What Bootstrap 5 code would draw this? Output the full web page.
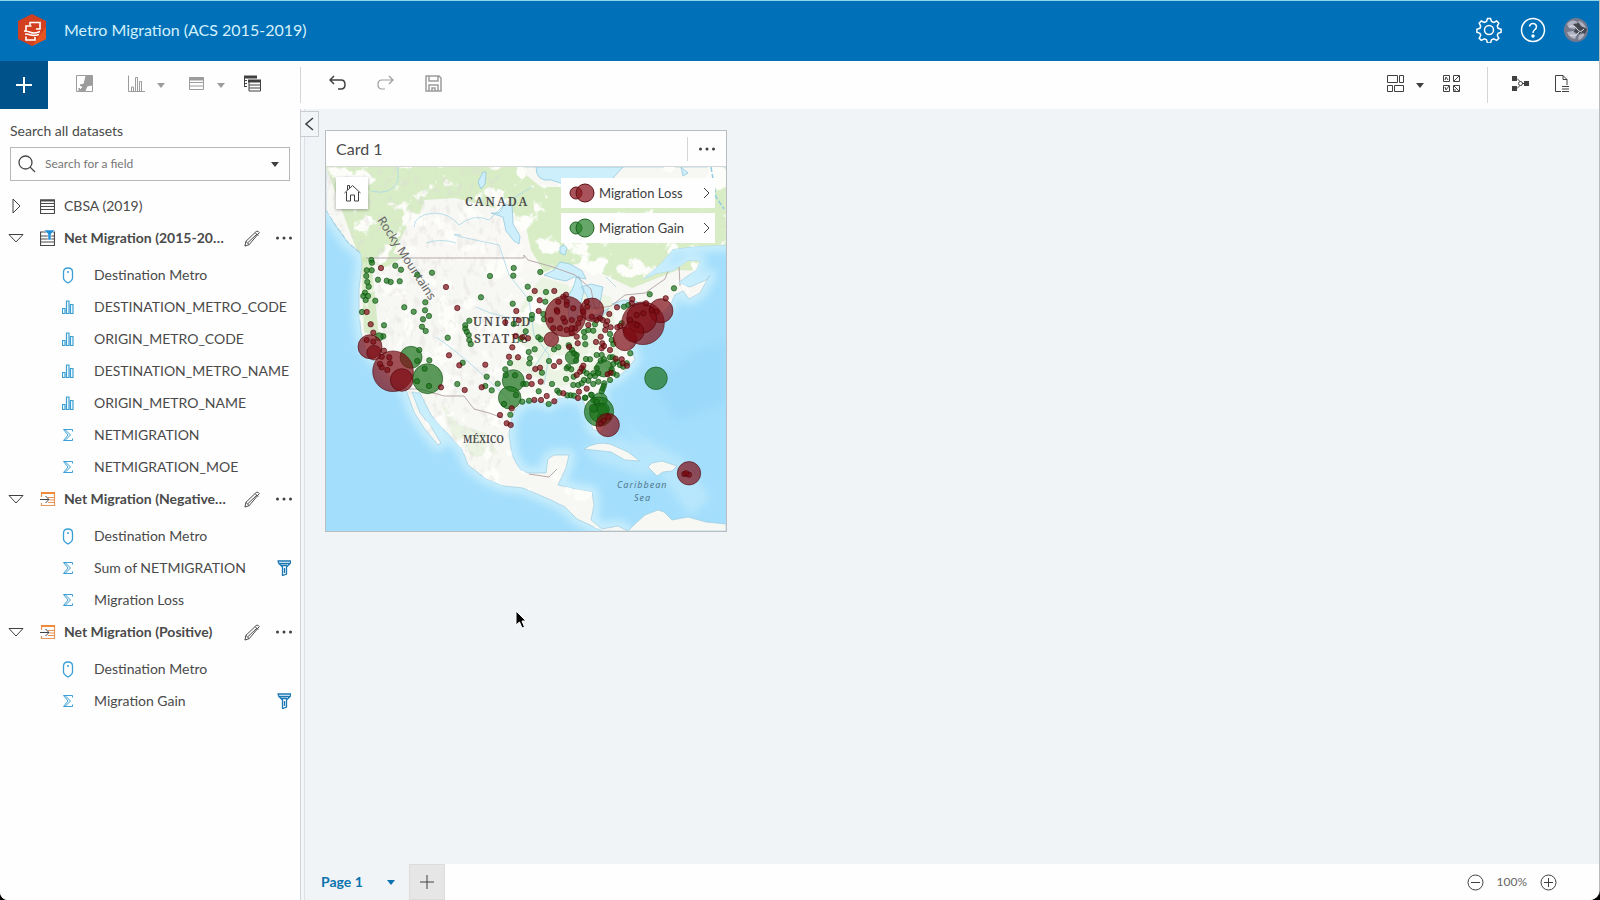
<!DOCTYPE html>
<html lang="en">
<head>
<meta charset="utf-8">
<meta name="viewport" content="width=device-width, initial-scale=1">
<title>Metro Migration (ACS 2015-2019)</title>
<link href="https://cdn.jsdelivr.net/npm/bootstrap@5.3.0/dist/css/bootstrap.min.css" rel="stylesheet">
<style>
body{font-family:Lato,"Open Sans",sans-serif;font-size:14px;line-height:20px;color:#4a4a4a;background:#000}
.app-frame{background:#fefefe;border-right:1px solid #bbb;border-radius:0 0 10px 8px;overflow:hidden}
.app-header{height:61px;background:#0070b8;border-top:1px solid #8fd6ec;color:#d3f1fb;padding:0 11px 2px 17px}
.app-title{font-size:16px;line-height:24px;font-weight:400;margin:0 0 0 17px}
button.plain{background:none;border:0;padding:0;color:#404040;display:inline-flex;align-items:center;justify-content:center}
svg{display:block}
svg:not([fill]){fill:none}
svg:not([stroke]){stroke:currentColor}
.toolbar-row{height:48px;background:#fefefe;padding-right:21px}
.toolbar-row button.tool{width:32px;height:32px}
.toolbar-row button.drop{width:18px;height:32px}
.toolbar-row button:disabled{color:#9c9c9c}
.toolbar-row button.add-data{width:48px;height:48px;background:#00528a;color:#fff}
.rule{width:1px;height:36px;background:#d6d6d6}
.gap-a{margin-left:20px}.gap-b{margin-left:10px}.gap-c{margin-left:32px}.gap-d{margin-left:18px}.gap-e{margin-left:6px}
.side-pane{width:301px;border-right:1px solid #d0d4d8;background:#fefefe;padding-top:12px}
.pane-edge{width:4px;background:#f4f7f9;border-right:1px solid #dde1e5}
.side-pane .search-label{margin:0 10px 6px;display:block}
.search-box{height:34px;margin:0 10px 9px 10px;border:1px solid #b8b8b8;padding:0 6px 0 7px}
.search-box input{border:0;outline:0;background:none;font-size:12px;min-width:0;color:#555;padding:0 0 0 9px}
.search-box input::placeholder{color:#777;opacity:1}
.dataset{height:32px;padding:0 6px 0 7px}
.dataset .twist{width:18px}
.dataset .kind{width:16px;margin:0 8px 0 15px}
.dataset .dots{width:20px;margin-left:13px}
.dataset .pen{width:18px;margin-left:8px}
.fields{padding:5px 9px 0 59px;margin:0;list-style:none}
.fields li{height:32px;white-space:nowrap}
.fields .glyph{width:17px;margin-right:18px;color:#3a9fd4}
.fields .funnel{margin-left:auto;color:#1b78b5}
.work-area{background:#f0f4f7;min-width:0}
.collapse-pane{position:absolute;left:-5px;top:2px}
button.collapse-btn{width:19px;height:26px;background:#f2f5f8;border:1px solid #c9cdd1}
.map-card{width:402px;margin:21px 0 0 20px;background:#fefefe;border:1px solid #b9bdc0}
.map-card .title-bar{height:36px;padding-left:10px;font-size:16px;border-bottom:1px solid #d8d8d8}
.title-bar .rule{height:24px}
.title-bar button{width:38px;height:34px}
.map-view{position:relative}
.home-tool{position:absolute;left:10px;top:10px}
button.home-btn{width:32px;height:32px;background:#fff;box-shadow:0 1px 3px #0005}
.legend-stack{position:absolute;right:11px;top:11px;width:154px}
.legend-stack button.legend-item{width:100%;height:30px;background:#fefefe;font-size:13px;padding:0 4px 0 8px}
.legend-stack button+button{margin-top:5px}
.map-view .swatch{width:26px;margin-right:4px}
.pages{height:36px;background:#fefefe}
.page-tab{width:104px;background:#f0f4f7;color:#0b73ae;font-weight:700;padding:0 14px 0 16px}
.page-tab a{color:inherit;text-decoration:none}
.pages button.new-page{width:36px;height:36px;background:#e6e6e6;border:1px solid #dcdcdc}
.zoom-set{font-size:12px;color:#666;margin-right:42px;gap:13px}
.pointer{position:absolute;left:210px;top:501px}
</style>
</head>
<body>
<svg width="0" height="0" class="position-absolute" aria-hidden="true">
<defs>
<symbol id="caret" viewBox="0 0 8 5"><path d="M0 0h8l-4 5z" fill="currentColor" stroke="none"/></symbol>
<symbol id="dots" viewBox="0 0 18 4"><g fill="currentColor" stroke="none"><circle cx="2.500" cy="2" r="1.500"/><circle cx="9" cy="2" r="1.500"/><circle cx="15.500" cy="2" r="1.500"/></g></symbol>
<symbol id="pencil" viewBox="0 0 18 18"><path d="M1 17l1-5L13 1.500q2-1 3.200 1.200L5.500 15.500zM2 12l3.500 3.500M12 3l3 3M4 13.500L13.500 4.500"/></symbol>
<symbol id="open" viewBox="0 0 16 9"><path d="M1 .5h14l-7 7.500z"/></symbol>
<symbol id="closed" viewBox="0 0 9 16"><path d="M1 1v14l7-7z"/></symbol>
<symbol id="pin" viewBox="0 0 12 17"><path d="M1.500 5Q1.500 1 6 1t4.500 4v6q0 2.500-4.500 5-4.500-2.500-4.500-5z" stroke-width="1.300"/><circle cx="6" cy="5" r="1" fill="currentColor" stroke="none"/></symbol>
<symbol id="bars" viewBox="0 0 12 14"><path d="M.5 8.500H3v5H.5zM4.500 1H7v12.500H4.500zM8.500 4.500H11v9H8.500z" stroke-width="1.200"/></symbol>
<symbol id="sigma" viewBox="0 0 12 14"><path d="M10.500 3.500V1.500h-9l4.500 5.500-4.500 5.500h9v-2M3.500 2l5 5-5 5"/></symbol>
<symbol id="funnel" viewBox="0 0 14 16"><path d="M.5 1h13v2l-4 4v7l-4 1.500V7l-4-4V1M1.500 3.500h11M4 5.500h6M7.500 8v5" stroke-width="1.300"/></symbol>
<symbol id="sheet" viewBox="0 0 15 15"><path d="M.5 1h14v13.500H.5zM.5 4.500h14M.5 7.500h14M.5 10.500h14" stroke-width="1.200"/><path d="M0 1.500h15" stroke-width="2"/></symbol>
<symbol id="result" viewBox="0 0 16 16"><path d="M1.500 6V1.500h13v13h-13V12M8 6.500h6M10 9h5M8 11.500h6" stroke="#e8955a" stroke-width="1.200"/><path d="M1 2h14" stroke="#f28a3c" stroke-width="2"/><path d="M0 8.500h9M5.500 5L9 8.500 5.500 12" stroke="#444"/></symbol>
</defs>
</svg>

<div class="app-frame vh-100 d-flex flex-column">
<header class="app-header d-flex align-items-center flex-shrink-0">
<svg width="30" height="34" viewBox="0 0 30 34" stroke="none" fill="none"><path d="M15 1l14 7v18l-14 7-14-7V8z" fill="#d2401f"/><path d="M15 33l14-7V14z" fill="#e95521"/><path d="M13 12V9.500h10v6.500h-4M14.500 13H9v5M7 18q4 0 7 1.500t9-1M8 21q3 0 6 1t8-.500M9 23.500V27h9v-3" stroke="#fff" stroke-width="1.600"/></svg>
<h1 class="app-title">Metro Migration (ACS 2015-2019)</h1>
<button class="plain ms-auto text-white" aria-label="Settings"><svg width="26" height="26" viewBox="0 0 26 26" stroke-width="1.500"><path d="M10.500 4.500L11.500 1.500h3l1 3 2.200 1 3-1.500 2.100 2.100-1.500 3 .8 2.200 3 1v3l-3 1-.8 2 1.500 3-2.100 2.100-3-1.500-2.200 1-1 3h-3l-1-3-2.200-1-3 1.500-2.100-2.100 1.500-3-.8-2-3-1v-3l3-1 .8-2.200-1.500-3L5.300 4l3 1.500z"/><circle cx="13" cy="13" r="4.500"/></svg></button>
<button class="plain text-white gap-d" aria-label="Help"><svg width="26" height="26" viewBox="0 0 26 26" stroke-width="1.500"><circle cx="13" cy="13" r="11.500"/><path d="M9.500 9.500Q10 6.500 13 6.500t3.500 3q0 2-2 3.500-1.500 1.200-1.500 3"/><circle cx="13" cy="19" r="1" fill="#fff"/></svg></button>
<button class="plain gap-d" aria-label="Account"><svg width="24" height="24" viewBox="0 0 24 24" stroke="none"><circle cx="12" cy="12" r="12" fill="#747a8c"/><path d="M3 6q4-5 9-3l3 4-5 4-5-1zM14 3q6 1 8 7l-5-1zM3 14l6-1 4 4-2 4Q5 20 3 14zM15 17l6-2q-2 6-7 7z" fill="#b0b3c2"/><path d="M9 6l6-1 4 6-3 5-6-2 2-4zM17 8l6 3-2 5-4-2z" fill="#45474e"/><path d="M5 9q5-3 8 2t7 0M6 17q6 2 9-3" stroke="#dde" stroke-width="1" fill="none"/></svg></button>
</header>

<div class="toolbar-row d-flex align-items-center flex-shrink-0">
<button class="plain add-data" aria-label="Add"><svg width="18" height="18" stroke-width="2"><path d="M9 1v16M1 9h16"/></svg></button>
<button class="plain tool gap-a pb-1" disabled aria-label="Map"><svg width="17" height="17" viewBox="0 0 17 17"><path d="M.5.500h16v16H.5z"/><path d="M10 1h6v9l-5 1-2 5-5-1 3-3-3-2 4-1z" fill="currentColor"/><path d="M3 13l2 2-2 1z" fill="currentColor"/></svg></button>
<button class="plain tool gap-a pb-1" disabled aria-label="Chart"><svg width="17" height="17" viewBox="0 0 17 17"><path d="M.5.500v16H17M3.500 16v-4h2v4M7.500 16V2.500h2V16M11.500 16V6.500h2V16"/></svg></button>
<button class="plain drop" disabled aria-label="Chart types"><svg width="8" height="5"><use href="#caret"/></svg></button>
<button class="plain tool gap-b pb-1" disabled aria-label="Table"><svg width="15" height="13" viewBox="0 0 15 13"><path d="M.5.500h14v12H.5zM0 5.500h15M0 9h15"/><path d="M0 2h15" stroke-width="3"/></svg></button>
<button class="plain drop" disabled aria-label="Table types"><svg width="8" height="5"><use href="#caret"/></svg></button>
<button class="plain tool gap-e pb-1" aria-label="Widgets"><svg width="17" height="17" viewBox="0 0 17 17"><path d="M5 6.500h11.500V16H5zM5 10h11M5 13h11M.5 1v11M1 5.500h2M1 8.500h2M1 11.500h2"/><path d="M0 2h13M4 6h13" stroke-width="3"/></svg></button>
<span class="rule gap-c"></span>
<button class="plain tool gap-a pb-1" aria-label="Undo"><svg width="17" height="16" viewBox="0 0 17 16" stroke-width="1.500"><path d="M5 1L1 5l4 4M1 5h11q4 0 4 4.500T12 14H9"/></svg></button>
<button class="plain tool ms-3 pb-1" disabled aria-label="Redo"><svg width="17" height="16" viewBox="0 0 17 16" stroke-width="1.200"><path d="M12 1l4 4-4 4M16 5H5Q1 5 1 9.500T5 14h3"/></svg></button>
<button class="plain tool ms-3 pb-1" disabled aria-label="Save"><svg width="17" height="17" viewBox="0 0 17 17" stroke-width="1.500"><path d="M1 1h13l2 2v13H1zM4 1v5h9V1M4 16v-6h9v6M7 16v-3h3v3"/></svg></button>
<button class="plain tool ms-auto pb-1" aria-label="Layout"><svg width="17" height="17" viewBox="0 0 17 17"><path d="M.5.500h10v7H.5zM12.500.500h4v7h-4zM.5 10.500h5v6h-5zM7.500 10.500h9v6h-9z"/></svg></button>
<button class="plain drop" aria-label="Layout options"><svg width="8" height="5"><use href="#caret"/></svg></button>
<button class="plain tool gap-e pb-1" aria-label="Arrange cards"><svg width="17" height="17" viewBox="0 0 17 17"><path d="M.5.500h6v6h-6zM10.500.500h6v6h-6zM.5 10.500h6v6h-6zM10.500 10.500h6v6h-6zM2 5l1-3 2 3M11 6l5-5M2 12l1 3 3-4M11 11l5 5M12 14v2"/></svg></button>
<span class="rule gap-a"></span>
<button class="plain tool ms-3 pb-1" aria-label="Analysis view"><svg width="17" height="17" viewBox="0 0 17 17"><path d="M0 1h5v5H0zM0 11h5v5H0zM12 6h5v5h-5z" fill="currentColor" stroke="none"/><path d="M5 3.500l3 3M5 13.500l3-3M10 8.500h2"/><circle cx="8.500" cy="8.500" r="2"/></svg></button>
<button class="plain tool gap-b pb-1" aria-label="Page report"><svg width="14" height="17" viewBox="0 0 14 17"><path d="M6 16.500H.5V.500H8l4 4V10M8 .5v4h4M7 11.500h7M7 14h7M7 16.500h7"/></svg></button>
</div>

<div class="d-flex flex-grow-1" style="min-height:0">
<aside class="side-pane flex-shrink-0">
<label class="search-label" for="field-search">Search all datasets</label>
<div class="search-box d-flex align-items-center">
<svg width="18" height="18" stroke-width="1.300" class="flex-shrink-0"><circle cx="7.500" cy="7.500" r="6.500"/><path d="M12 12l5 5"/></svg>
<input id="field-search" class="flex-grow-1" type="text" placeholder="Search for a field">
<button class="plain me-1" aria-label="Field filters"><svg width="8" height="5"><use href="#caret"/></svg></button>
</div>
<div id="dataset-tree"></div>
</aside>
<div class="pane-edge flex-shrink-0"></div>

<main class="work-area flex-grow-1 d-flex flex-column position-relative">
<div class="collapse-pane"><button class="plain collapse-btn" aria-label="Collapse pane"><svg width="9" height="14" stroke-width="1.500"><path d="M8 1L1 7l7 6"/></svg></button></div>
<section class="map-card">
<div class="title-bar d-flex align-items-center"><span class="me-auto">Card 1</span><span class="rule"></span><button class="plain" aria-label="Card options"><svg width="18" height="4"><use href="#dots"/></svg></button></div>
<div class="map-view">
<svg class="w-100" viewBox="0 0 400 364" stroke="none" role="img" aria-label="Migration map">
<defs>
<clipPath id="land-clip"><use href="#land"/></clipPath>
<filter id="veg" x="0" y="0" width="100%" height="100%"><feTurbulence type="fractalNoise" baseFrequency=".045" numOctaves="5" seed="8"/><feColorMatrix values="0 0 0 0 .98 0 0 0 0 .98 0 0 0 0 .96 14 0 0 0 -8"/></filter>
<filter id="relief" x="0" y="0" width="100%" height="100%"><feTurbulence type="fractalNoise" baseFrequency=".16 .1" numOctaves="4" seed="3"/><feColorMatrix values="0 0 0 0 .72 0 0 0 0 .7 0 0 0 0 .68 5 0 0 0 -2.700"/></filter>
<filter id="soft"><feGaussianBlur stdDeviation="4"/></filter>
<path id="land" d="M0 0H400V78L372 79 347 82 335 96 316 113 330 107 347 104 362 94 374 94 370 103 352 116 364 120 380 113 384 108 374 126 363 132 357 124 349 128 345 136 337 145 325 152 314 165 304 180 309 192 301 202 292 210 279 216 275 226 279 243 280 258 274 266 267 262 263 246 256 232 244 230 233 231 222 238 212 233 199 234 189 243 184 256 183 268 186 288 194 303 203 306 220 306 222 292 228 288 243 288 240 301 232 318 249 322 266 325 268 338 265 353 276 362 292 359 302 364H276L264 358 251 352 239 340 225 333 197 321 178 319 159 311 142 298 136 282 120 265 105 248 94 226 86 225 94 246 104 258 115 276 112 278 98 261 88 245 79 220 65 211 51 196 39 181 35 165 33 145 33 122 36 98 35 87 22 76 9 58 0 43Z"/>
</defs>
<rect width="400" height="364" fill="#a3defc"/>
<path d="M325 215l40-30 35-10v60l-50 20z" fill="#98d7fa" filter="url(#soft)" opacity=".7"/>
<use href="#land" stroke="#c9eefc" stroke-width="12" stroke-linejoin="round" filter="url(#soft)"/>
<g fill="#c5ecfb" filter="url(#soft)"><path d="M255 280l40-10 45 25-20 15-50-15zM295 250l20 20 40 20 30 40-20 20-30-40z" opacity=".6"/></g>
<g fill="#f7f7f4" stroke="#9fcde0" stroke-width=".7"><use href="#land"/><path d="M258 282q12-8 26-5l18 8 12 9-15-1-14-8zM322 300l4-4 10-2 15 5-5 5-9 1-6 4zM302 364l8-8 9-8 13-5 6 2 8 8 16-3 18 5 20 2v7z"/></g>
<g clip-path="url(#land-clip)">
<path d="M0 0h90l8 35-20 55-18 10-25-5zM70 0l60 0 60 0 25 20 60 0h125v85l-48-2-46 18-52-25-40 10-20-25-5-35-60-15-45 3-15-10z" fill="#d8edc6"/>
<path d="M215 110l70 20 10 70-60 20-50-20 10-60zM115 235l12 35 20 20 25-3-10-20-30-10z" fill="#e0efd1" opacity=".5"/>
<path d="M35 90l10 0 8 80-15-5z" fill="#cbe5b4" opacity=".7"/>
<path d="M85 52q30-12 45 8t45-12l25 12 5 23 12 20-110-7-40-10z" fill="#f9f8f4"/>
<rect width="400" height="364" filter="url(#veg)"/>
<path d="M0 0h90l45 130-20 100 60 90H90L30 170z" filter="url(#relief)" opacity=".35"/>
<g stroke="#a9d8e6" stroke-width=".8" fill="none"><path d="M45 24q20 5 27-10l0-14M88 60q0-12 20-14 15 0 25 12 15-12 30-5l18-18 25-15M135 68q-25-3 38 10l10 30 20 25 5 35 15 20-5 30M100 76q15-5 30 0M150 140q30 15 60 10M110 170q30 20 75 65M240 150q-15 25-35 55M280 110l10 10"/></g>
<g fill="#cdeffb" stroke="#94c9dd" stroke-width=".8"><path d="M210 0q0 15 15 13l25 8 35-8 12-13zM152 15l5-10 3 0-1 12-4 5zM165 46l8 0 5-8 8-1 1 20 7 12-1 8-5-3-8-10-3-14zM234 80l4-2 3 3-2 7-5-2zM218 108l10-5 6-8 10 2 12 7 4 8-12-2-8 4-10-2zM243 151l-2-20 6-10 3-10 3-2 5 14-4 17-5 14zM255 120l10-3 12 3-4 20-7 1-5-12zM258 151l15-4 10-6-10 13zM286 137l12-4 14 2-3 4-14 1zM355 0l7 6-5 3z"/></g>
<g stroke="#8fcbe2" stroke-width="1.500" fill="none" stroke-dasharray="5 2"><path d="M0 44l9 14 13 18 13 11M3 55l10 10 17 24M385 0l5 30 8 12"/></g>
<g stroke="#b6a9ac" stroke-width="1" fill="none"><path d="M40 91H198v-3l4 5 25 7 22 8 16 14 4 20 16-3 14-11 20-2 20-14 6-16 8 3 1 20M78 222h16l24 7 20 0 10 13 15 4 14 5M203 307l20 3 8-8"/></g>
</g>
<g font-family="'Noto Serif','Liberation Serif',serif" font-weight="600" fill="#4b4b4b" font-size="12"><text x="139" y="39" letter-spacing="2">CANADA</text><text x="147" y="159" letter-spacing="2">UNITED</text><text x="148" y="176" letter-spacing="2">STATES</text><text x="137" y="276" font-size="10">MÉXICO</text></g>
<text transform="translate(51 53) rotate(57)" font-family="'Noto Sans',sans-serif" font-size="12" fill="#666">Rocky Mountains</text>
<g font-family="'Noto Sans',sans-serif" font-style="italic" font-size="9" fill="#50788c" letter-spacing="1"><text x="291" y="321">Caribbean</text><text x="308" y="334">Sea</text></g>
<g id="metros"></g>
</svg>
<div class="home-tool"><button class="plain home-btn" aria-label="Default extent"><svg width="17" height="18" viewBox="0 0 17 18"><path d="M.5 9l8-7.500 8 7.500M2.500 8v9h4v-6h4v6h4V8M3.500 6V1.500h2V4"/></svg></button></div>
<div class="legend-stack">
<button class="plain legend-item"><svg class="swatch" height="20" viewBox="0 0 26 20" fill="#8b1a22" fill-opacity=".75" stroke="#5e1015"><circle cx="7" cy="10" r="6"/><circle cx="16" cy="10" r="9"/></svg><span class="me-auto">Migration Loss</span><svg width="8" height="12"><path d="M1 1l5 5-5 5"/></svg></button>
<button class="plain legend-item"><svg class="swatch" height="20" viewBox="0 0 26 20" fill="#26802a" fill-opacity=".7" stroke="#1c6422"><circle cx="7" cy="10" r="6"/><circle cx="16" cy="10" r="9"/></svg><span class="me-auto">Migration Gain</span><svg width="8" height="12"><path d="M1 1l5 5-5 5"/></svg></button>
</div>
</div>
</section>
<div class="pointer"><svg width="12" height="19" viewBox="0 0 12 19"><path d="M1 1v14l3.500-3 2.500 6 2.500-1-2.500-6H11z" fill="#000" stroke="#fff"/></svg></div>
<footer class="pages d-flex align-items-center mt-auto">
<div class="page-tab h-100 d-flex align-items-center"><a class="me-auto" href="#page-1">Page 1</a><button class="plain" style="color:#0b73ae" aria-label="Page options"><svg width="8" height="5"><use href="#caret"/></svg></button></div>
<button class="plain new-page" aria-label="New page"><svg width="14" height="14"><path d="M7 0v14M0 7h14"/></svg></button>
<div class="zoom-set ms-auto d-flex align-items-center"><button class="plain" aria-label="Zoom out"><svg width="17" height="17"><circle cx="8.500" cy="8.500" r="7.500"/><path d="M4 8.500h9"/></svg></button><span>100%</span><button class="plain" aria-label="Zoom in"><svg width="17" height="17"><circle cx="8.500" cy="8.500" r="7.500"/><path d="M4 8.500h9M8.500 4v9"/></svg></button></div>
</footer>
</main>
</div>
</div>

<script>
const use = (id, w, h) => `<svg width="${w}" height="${h}"><use href="#${id}"/></svg>`;
const glyphs = {pin: use('pin', 12, 17), bars: use('bars', 12, 14), sigma: use('sigma', 12, 14)};
const filteredSheet = `<svg width="15" height="16" viewBox="0 0 15 16"><path d="M.5 2h14v13.500H.5zM.5 6h14M.5 9h14M.5 12h14" stroke-width="1.200"/><path d="M4 0h11l-4 4v6H8V4z" fill="#1f8fd6" stroke="#fff" stroke-width=".5"/></svg>`;
const datasets = [
  {name: 'CBSA (2019)', icon: use('sheet', 15, 15)},
  {name: 'Net Migration (2015-20…', icon: filteredSheet, open: true, fields: [['pin', 'Destination Metro'], ['bars', 'DESTINATION_METRO_CODE'], ['bars', 'ORIGIN_METRO_CODE'], ['bars', 'DESTINATION_METRO_NAME'], ['bars', 'ORIGIN_METRO_NAME'], ['sigma', 'NETMIGRATION'], ['sigma', 'NETMIGRATION_MOE']]},
  {name: 'Net Migration (Negative…', icon: use('result', 16, 16), open: true, fields: [['pin', 'Destination Metro'], ['sigma', 'Sum of NETMIGRATION', 1], ['sigma', 'Migration Loss']]},
  {name: 'Net Migration (Positive)', icon: use('result', 16, 16), open: true, fields: [['pin', 'Destination Metro'], ['sigma', 'Migration Gain', 1]]}
];
document.getElementById('dataset-tree').innerHTML = datasets.map(d => `
<div class="dataset d-flex align-items-center">
<button class="plain twist flex-shrink-0" aria-label="Expand">${d.open ? use('open', 16, 9) : use('closed', 9, 16)}</button>
<span class="kind flex-shrink-0">${d.icon}</span>
<span class="text-truncate flex-grow-1 ${d.open ? 'fw-bold' : ''}">${d.name}</span>
${d.open ? `<button class="plain pen flex-shrink-0" aria-label="Rename">${use('pencil', 17, 17)}</button><button class="plain dots flex-shrink-0" aria-label="Options">${use('dots', 18, 4)}</button>` : ''}
</div>
${d.fields ? `<ul class="fields">${d.fields.map(([g, t, f]) => `<li class="d-flex align-items-center"><span class="glyph d-flex flex-shrink-0 justify-content-center">${glyphs[g]}</span><span>${t}</span>${f ? `<span class="funnel">${use('funnel', 14, 16)}</span>` : ''}</li>`).join('')}</ul>` : ''}`).join('');

// Metro areas, grouped by region. Units are thirds of a map unit from the region's origin: x,y[,radius].
const regions = [
 {x: 14, y: 73,
  gain: '213,352,33 263,416,45 94,60 96,68 80,91 95,91 79,108 82,126 86,140 75,158 70,168 84,168 77,180 106,182 66,216 114,119 140,122 152,126 179,124 166,77 183,89 232,104 276,98 256,187 255,211 267,228 249,238 246,260 257,273 193,202 221,215 132,256 130,289 118,290,12 323,293 388,242 376,256 376,266 386,285 380,275 388,300 392,312 268,361 254,386 231,424 267,438 232,363 238,330 368,368 352,432',
  loss: '90,320,36 102,338,22 159,394,61 185,420,34 123,84 318,141 352,204 80,216 92,253 100,278 327,346 358,376 303,442 374,450 80,300 100,305 132,332 125,350 148,352 125,382 142,390 120,372 150,370'},
 {x: 154, y: 73,
  gain: '528,415,34 100,422,33 89,473,34 276,352,20 372,385,26 360,480,22 30,108 101,84 100,107 181,96 143,140 198,156 149,176 196,185 98,191 3,172 156,225 155,237 192,238 190,222 101,252 137,274 122,296 175,292 182,298 164,328 146,336 150,355 148,370 90,369 20,410 53,431 35,451 16,438 76,388 77,405 105,406 130,432 139,432 108,465 127,485 72,492 207,363 186,398 176,454 216,432 147,482 206,492 232,452 238,458 260,385 258,417 265,380 274,388 281,410 262,466 272,466 282,467 276,330 222,328 235,322 266,316 282,340 290,345 288,362 316,313 314,292 312,276 325,270 340,272 345,253 330,358 318,357 320,400 310,392 330,408 340,400 350,345 350,385 345,408 362,362 372,358 390,352 398,352 410,365 420,375 400,372 395,388 355,400 365,345 400,400 410,405 390,420 295,435 305,430 325,422 340,432 355,425 280,435 312,420 333,464 316,473 340,480 451,340 432,200 509,163 582,145 425,250 445,195 390,282 395,300 400,312 430,380 440,370 91,524',
  loss: '256,229,61 336,209,35 214,298,22 489,250,64 435,297,35 543,212,36 485,235,45 461,275,31 164,153 223,153 179,181 109,213 176,213 76,247 116,241 107,288 127,292 144,295 97,322 87,350 114,352 16,374 5,442 147,410 166,387 180,383 155,432 182,425 163,480 183,480 200,468 223,484 222,378 238,365 250,460 294,474 297,455 320,446 290,405 300,395 305,385 310,377 268,321 293,310 290,290 258,164 250,170 348,306 362,290 367,310 365,325 372,318 390,330 376,270 378,255 382,244 388,222 368,240 360,235 392,262 411,202 457,178 455,190 498,190 557,175 420,258 407,356 425,358 428,370 441,377 383,403 392,398 412,262 275,280 235,185 260,185 230,210 260,195 232,215 280,205 212,240 250,235 255,245 275,240 220,265 240,265 260,270 285,265 300,235 310,215 322,200 320,185 335,230 350,240 325,255 275,265 295,250 450,240 470,225 515,210 530,215 470,255 490,220 95,505 60,525 80,550 92,555'},
 {x: 199, y: 163,
  gain: '222,245,44 222,248,28 235,238,18 205,235,12 215,215 238,160 236,168 233,176 230,184 200,195 180,203 225,262',
  loss: '248,285,35 492,430,35 478,432,8 492,434,8 484,430,8 228,280 236,272 250,262'}
];
const paint = {gain: ['#187018', '#0c520f'], loss: ['#7c0a12', '#4f0508']};
document.getElementById('metros').innerHTML = regions.map(r => ['gain', 'loss'].map(k =>
  r[k].split(' ').map(p => { const [x, y, s = 8] = p.split(',').map(Number);
    return `<circle cx="${(r.x + x / 3).toFixed(1)}" cy="${(r.y + y / 3).toFixed(1)}" r="${(s / 3).toFixed(1)}" fill="${paint[k][0]}" fill-opacity=".7" stroke="${paint[k][1]}" stroke-opacity=".75" stroke-width=".8"/>`; }).join('')).join('')).join('');
</script>
<script src="https://cdn.jsdelivr.net/npm/bootstrap@5.3.0/dist/js/bootstrap.bundle.min.js"></script>
</body>
</html>
